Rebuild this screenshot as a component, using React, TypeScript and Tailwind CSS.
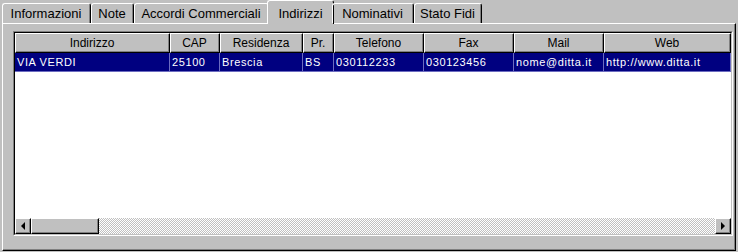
const TABS = [
  { label: "Informazioni", w: 89 },
  { label: "Note", w: 43 },
  { label: "Accordi Commerciali", w: 135 },
  { label: "Indirizzi", w: 63, active: true },
  { label: "Nominativi", w: 82 },
  { label: "Stato Fidi", w: 68 },
];

const COLS = [
  { label: "Indirizzo", w: 155, value: "VIA VERDI" },
  { label: "CAP", w: 50, value: "25100" },
  { label: "Residenza", w: 83, value: "Brescia" },
  { label: "Pr.", w: 31, value: "BS" },
  { label: "Telefono", w: 90, value: "030112233" },
  { label: "Fax", w: 90, value: "030123456" },
  { label: "Mail", w: 90, value: "nome@ditta.it" },
  { label: "Web", w: 127, value: "http://www.ditta.it" },
];

function Raised({
  className = "",
  width,
  children,
}: {
  className?: string;
  width?: number;
  children?: React.ReactNode;
}) {
  return (
    <div
      className={"border-t border-l border-white border-r border-b border-r-black border-b-black " + className}
      style={width ? { width } : undefined}
    >
      <div className="h-full w-full border-r border-b border-[#808080] flex items-center justify-center">
        {children}
      </div>
    </div>
  );
}

export default function App() {
  return (
    <div
      className="w-[738px] h-[252px] bg-[#c0c0c0] text-black overflow-hidden"
      style={{ fontFamily: '"Liberation Sans", Arial, sans-serif' }}
    >
      {/* tab strip */}
      <div className="flex items-end h-[23px] pl-[2px] relative z-10">
        {TABS.map((t, idx) =>
          t.active ? (
            <div
              key={idx}
              className="-mx-[2px] h-[24px] -mb-[1px] bg-[#c0c0c0] border-t border-l border-white border-r border-r-black rounded-t-[3px] text-[13px] flex items-start pt-[3px] justify-center whitespace-nowrap"
              style={{ width: t.w + 4 }}
            >
              {t.label}
            </div>
          ) : (
            <div
              key={idx}
              className="h-[20px] border-t border-l border-white border-r border-r-black rounded-t-[3px] text-[13px] whitespace-nowrap"
              style={{ width: t.w }}
            >
              <div className="h-full w-full border-r border-[#808080] flex items-center justify-center pt-[1px]">
                {t.label}
              </div>
            </div>
          )
        )}
      </div>

      {/* panel */}
      <div className="ml-[2px] w-[734px] h-[228px] border-t border-l border-white border-r border-b border-r-black border-b-black">
        <div className="h-full w-full border-r border-b border-[#808080] pt-[7px] pl-[10px]">
          {/* grid */}
          <div className="w-[720px] h-[205px] border-t border-l border-[#808080] border-r border-b border-r-white border-b-white">
            <div className="h-full w-full border-t border-l border-black border-r border-b border-r-[#c0c0c0] border-b-[#c0c0c0] bg-white flex flex-col">
              <div className="flex h-[20px]">
                {COLS.map((c, idx) => (
                  <Raised key={idx} width={c.w} className="h-[20px] bg-[#c0c0c0] text-[12px] shrink-0">
                    <span className="leading-[16px] whitespace-nowrap">{c.label}</span>
                  </Raised>
                ))}
              </div>
              <div className="flex h-[19px] bg-[#000080] text-white border-b border-[#6c6cc0]">
                {COLS.map((c, idx) => (
                  <div
                    key={idx}
                    className="shrink-0 border-r border-[#6c6cc0] pl-[2px] text-[11px] tracking-[0.6px] flex items-center whitespace-nowrap overflow-hidden"
                    style={{ width: c.w }}
                  >
                    {c.value}
                  </div>
                ))}
              </div>
              <div className="flex-1" />
              {/* horizontal scrollbar */}
              <div className="flex h-[16px]">
                <Raised width={16} className="h-[16px] bg-[#c0c0c0] shrink-0">
                  <div className="w-0 h-0 border-y-[4px] border-y-transparent border-r-[4px] border-r-black" />
                </Raised>
                <Raised width={68} className="h-[16px] bg-[#c0c0c0] shrink-0" />
                <div className="flex-1 bg-[repeating-conic-gradient(#ffffff_0_25%,#c0c0c0_0_50%)] bg-[length:2px_2px]" />
                <Raised width={16} className="h-[16px] bg-[#c0c0c0] shrink-0">
                  <div className="w-0 h-0 border-y-[4px] border-y-transparent border-l-[4px] border-l-black" />
                </Raised>
              </div>
            </div>
          </div>
        </div>
      </div>
    </div>
  );
}
